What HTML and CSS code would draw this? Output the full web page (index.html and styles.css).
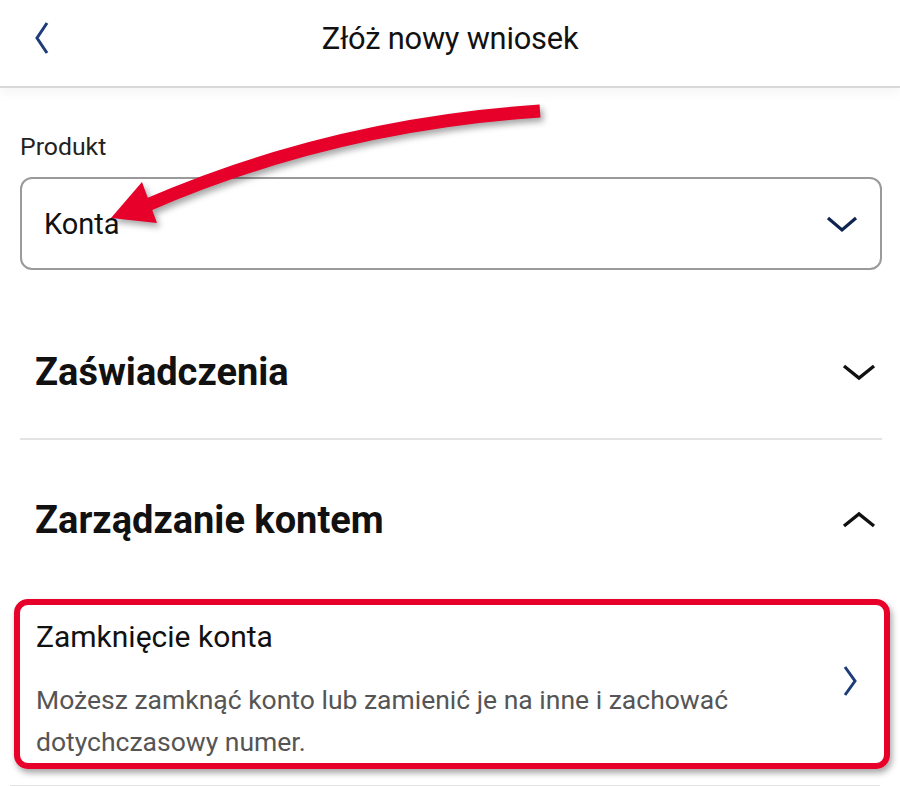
FILE: index.html
```html
<!DOCTYPE html>
<html lang="pl">
<head>
  <meta charset="UTF-8" />
  <meta name="viewport" content="width=device-width, initial-scale=1" />
  <title>Złóż nowy wniosek</title>
  <link rel="stylesheet" href="styles.css">
</head>
<body>
  <header class="topbar">
    <button class="back-btn" aria-label="Wstecz">
      <svg width="16" height="34" viewBox="0 0 16 34"><path d="M13 2 L3 17 L13 32" fill="none" stroke="#1d3c78" stroke-width="3"/></svg>
    </button>
    <h1>Złóż nowy wniosek</h1>
    <span></span>
  </header>

  <main class="content">
    <!-- Product picker -->
    <label class="field-label" for="productSelect">Produkt</label>
    <div class="select-box" id="productSelect">
      <span>Konta</span>
      <svg width="32" height="18" viewBox="0 0 32 18"><path d="M2 3 L16 15 L30 3" fill="none" stroke="#0f2350" stroke-width="3.2"/></svg>
    </div>

    <!-- Accordion groups -->
    <div class="group">
      <div class="group-head first">
        <h2>Zaświadczenia</h2>
        <svg width="34" height="18" viewBox="0 0 34 18"><path d="M2 3 L17 15 L32 3" fill="none" stroke="#111" stroke-width="3.4"/></svg>
      </div>
    </div>

    <div class="group open">
      <div class="group-head">
        <h2>Zarządzanie kontem</h2>
        <svg width="34" height="18" viewBox="0 0 34 18"><path d="M2 15 L17 3 L32 15" fill="none" stroke="#111" stroke-width="3.4"/></svg>
      </div>
      <div class="item highlighted">
        <div class="item-text">
          <h3>Zamknięcie konta</h3>
          <p>Możesz zamknąć konto lub zamienić je na inne i zachować dotychczasowy numer.</p>
        </div>
        <svg width="16" height="32" viewBox="0 0 16 32"><path d="M3 2 L13 16 L3 30" fill="none" stroke="#1d3c78" stroke-width="3"/></svg>
      </div>
      <div class="item-rule"></div>
    </div>
  </main>

  <!-- pointer arrow drawn over the product field -->
  <svg class="pointer" width="600" height="260" viewBox="0 0 600 260">
    <path d="M540 111 Q330 125 145 206" fill="none" stroke="#e6002a" stroke-width="13"/>
    <polygon points="142,182 157,223 111,218" fill="#e6002a"/>
  </svg>
</body>
</html>
```

FILE: styles.css
```css
body {
  margin: 0;
  background: #fff;
  font-family: Roboto, "Noto Sans", sans-serif;
  color: #111;
  position: relative;
  width: 900px;
  height: 786px;
  overflow: hidden;
}
.topbar {
  height: 88px;
  box-sizing: border-box;
  padding-bottom: 10px;
  display: grid;
  grid-template-columns: 90px 1fr 90px;
  align-items: center;
  border-bottom: 2px solid #d8d8d8;
  box-shadow: 0 6px 10px rgb(0 0 0 / 0.04);
}
.back-btn {
  background: none;
  border: none;
  padding: 0 0 0 34px;
  display: flex;
  cursor: pointer;
}
.topbar h1 {
  margin: 0;
  text-align: center;
  font-weight: 400;
  font-size: 30.8px;
  letter-spacing: -0.2px;
}
.content {
  padding: 0 18px 0 20px;
}
.field-label {
  display: block;
  margin-top: 44px;
  font-size: 24.8px;
  line-height: 30px;
  color: #222;
}
.select-box {
  margin-top: 15px;
  height: 89px;
  border: 2px solid #9a9a9a;
  border-radius: 12px;
  display: flex;
  align-items: center;
  justify-content: space-between;
  padding: 0 22px 0 22px;
  font-size: 29px;
}
.group-head {
  display: flex;
  align-items: center;
  justify-content: space-between;
  padding: 0 6px 0 15px;
  height: 159px;
}
.group-head.first {
  padding-top: 35px;
  height: 133px;
  border-bottom: 2px solid #e3e3e3;
}
.group-head h2 {
  margin: 0;
  font-size: 38px;
  font-weight: 700;
}
.item {
  display: flex;
  align-items: center;
  justify-content: space-between;
  margin: 0 -8px 0 -6px;
  padding: 12px 26px 0 16px;
  border: 6px solid #e6002a;
  border-radius: 14px;
  box-shadow: 2px 4px 6px rgb(0 0 0 / 0.35);
}
.item svg {
  margin-top: -18px;
}
.item h3 {
  margin: 0 0 22px;
  font-size: 30px;
  font-weight: 400;
  line-height: 40px;
}
.item p {
  margin: 0;
  font-size: 26.5px;
  line-height: 42px;
  color: #555;
  max-width: 720px;
}
.item-rule {
  margin: 16px 2px 0 -10px;
  border-top: 2px solid #e3e3e3;
}
.pointer {
  position: absolute;
  left: 0;
  top: 0;
  filter: drop-shadow(3px 4px 3px rgb(0 0 0 / 0.35));
  pointer-events: none;
}
```
